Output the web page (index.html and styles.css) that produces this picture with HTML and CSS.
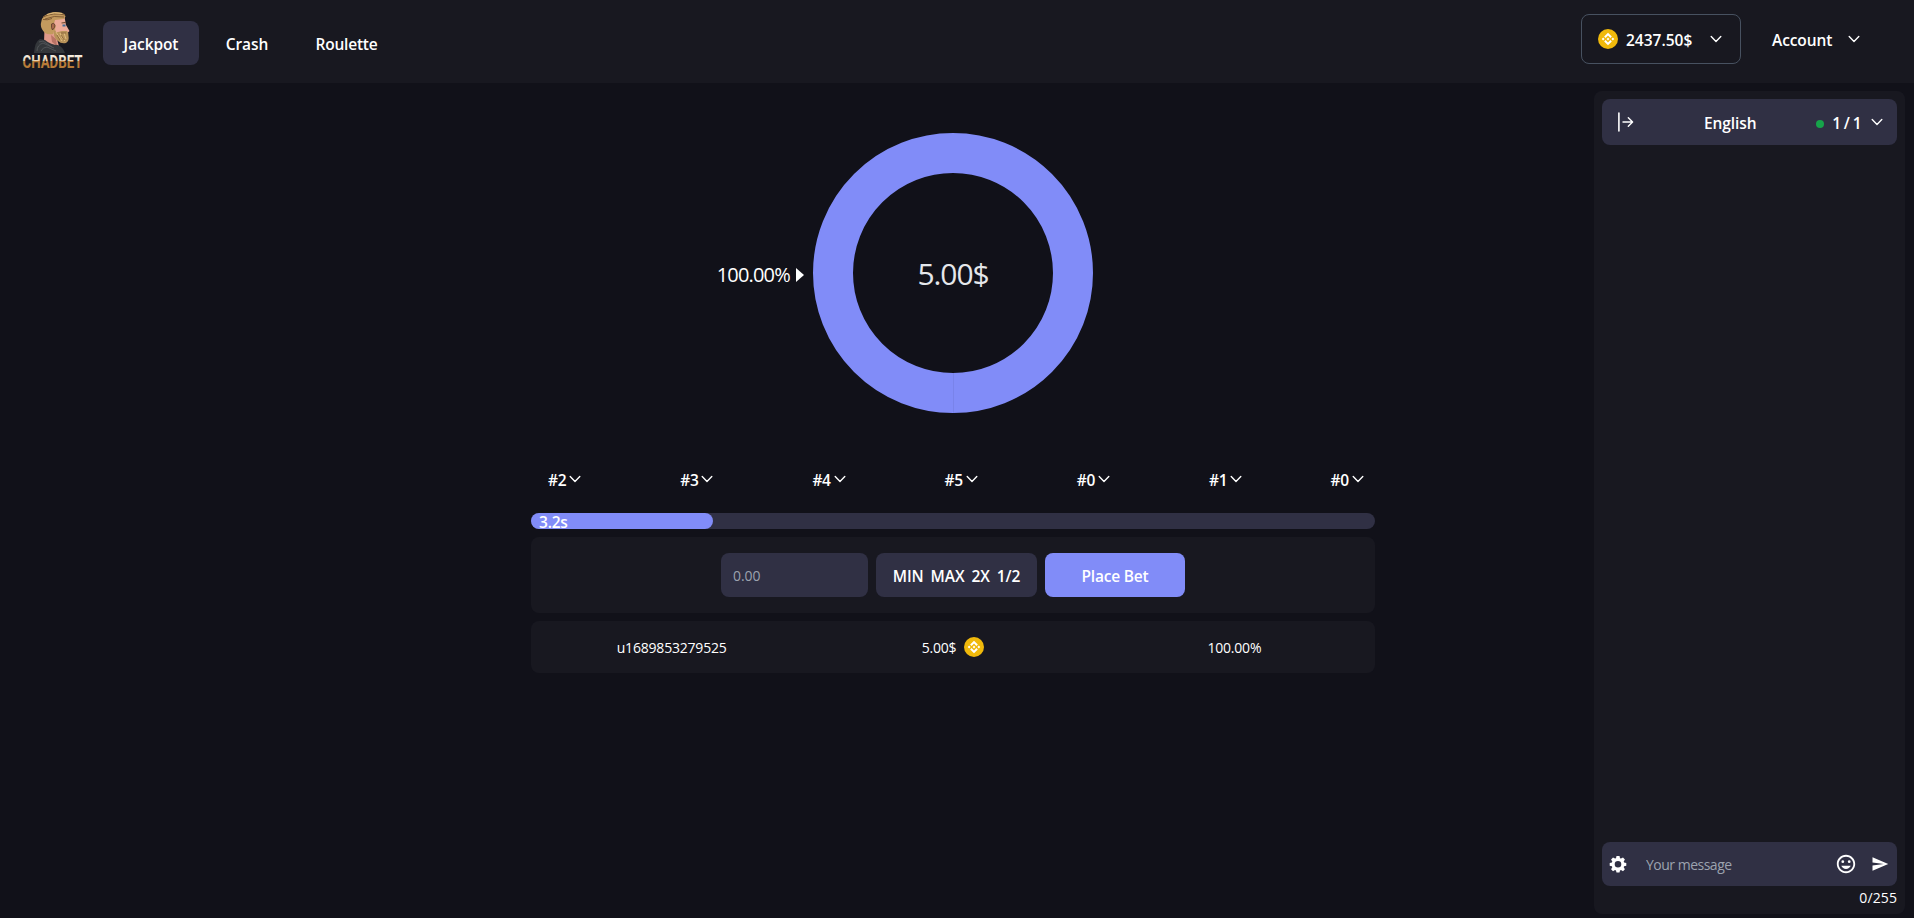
FILE: index.html
```html
<!DOCTYPE html>
<html lang="en">
<head>
<meta charset="utf-8">
<title>Chadbet</title>
<link rel="stylesheet" href="styles.css">
</head>
<body>
<svg width="0" height="0" class="defs">
  <symbol id="chev" viewBox="0 0 16 16"><path d="M3.2 5.600 8 10.400l4.800-4.800" fill="none" stroke="currentColor" stroke-width="1.400" stroke-linecap="round" stroke-linejoin="round"/></symbol>
  <symbol id="bnb" viewBox="0 0 32 32"><circle cx="16" cy="16" r="16" fill="#f0b90b"/><path fill="#fff" d="M12.116 14.404 16 10.52l3.886 3.886 2.26-2.26L16 6l-6.144 6.144 2.26 2.26zM6 16l2.26-2.26L10.52 16l-2.26 2.26L6 16zm6.116 1.596L16 21.48l3.886-3.886 2.26 2.259L16 26l-6.144-6.144-.003-.003 2.263-2.257zM21.48 16l2.26-2.26L26 16l-2.26 2.26L21.48 16zm-3.188-.002h.002V16L16 18.294l-2.291-2.29-.004-.004.004-.003.401-.402.195-.195L16 13.706l2.293 2.293z"/></symbol>
</svg>
<header class="topbar">
  <div class="logo">
    <svg class="head" width="40" height="42" viewBox="0 0 40 42">
      <path d="M10.500 18 24 22l-.5 8 2 7-8 1-7.500-7z" fill="#e0998a"/>
      <path d="m17 24 5 4 1 7-5-4z" fill="#b97365"/>
      <path d="M0 42q1-12 6-14l5 1q6 5 13 5 5 2 7 8z" fill="#33363a"/>
      <path d="M3 40q0-6 6-8 4 2 11 5M7 40q2-4 6-4l9 4M5 31l4-1 9 6" fill="none" stroke="#575a5e" stroke-width=".8"/>
      <path d="m17 6 13.500 0 1.500 8 3.500 6-2 2-14 2-5-7z" fill="#edaa98"/>
      <path d="M10 5Q17-.2 25 1.200q6 .8 6.500 4.300L30 8l-9 1-1 4 2 2-3 8q-5 1-8-1-5-5-4-10 0-4 3-7z" fill="#c39a5e"/>
      <path d="M9 6q10-5 22-2M11 8q9-4 19-2M9 8.500q4 1 9-1" fill="none" stroke="#805b34" stroke-width="1"/>
      <path d="M13 3.500Q20 .6 28 2.500" fill="none" stroke="#dfbd7d" stroke-width="1"/>
      <path d="M17.500 13q2.500-2 3.500 1 0 3-2.500 5-1.500-2-1-6z" fill="#a9694d" stroke="#5d3a2b" stroke-width=".8"/>
      <path d="M21 17q0 5 3 4l4-1 5 0q2 2 1.500 5 1 5-2.500 7-5 1-8-2-4-3-4.500-8z" fill="#b9935a"/>
      <path d="m22 21 3 5 3 4m-2-8 2 5 3 3m-1-8 2 6" fill="none" stroke="#e0bd80" stroke-width="1"/>
      <path d="m23 24 3 5m1-5 3 5m-3-7 5 0" fill="none" stroke="#7c5731" stroke-width=".7"/>
      <path d="m27.500 12 4.500-.6" stroke="#754d35" stroke-width="1.200"/>
      <path d="M28.500 14.500h3" stroke="#456c98" stroke-width="2"/>
    </svg>
    <svg class="brand" width="64" height="20" viewBox="0 0 64 20">
      <defs><linearGradient id="gold" gradientUnits="userSpaceOnUse" x1="0" y1="1" x2="0" y2="15"><stop offset=".1" stop-color="#f5eee3"/><stop offset=".48" stop-color="#e6cfae"/><stop offset=".52" stop-color="#b87b38"/><stop offset="1" stop-color="#b87b38"/></linearGradient></defs>
      <text x=".5" y="14.500" textLength="60" lengthAdjust="spacingAndGlyphs" fill="url(#gold)">CHADBET</text>
    </svg>
  </div>
  <nav class="nav">
    <a class="tab active"><span>Jackpot</span></a>
    <a class="tab crash"><span>Crash</span></a>
    <a class="tab roulette"><span>Roulette</span></a>
  </nav>
  <div class="right">
    <button class="balance"><svg class="coin"><use href="#bnb"/></svg><span>2437.50$</span><svg class="chev"><use href="#chev"/></svg></button>
    <button class="account"><span>Account</span><svg class="chev"><use href="#chev"/></svg></button>
  </div>
</header>
<div class="body">
  <main class="game">
    <div class="wheel">
      <div class="pointer"><span>100.00%</span><i></i></div>
      <svg width="280" height="280" viewBox="0 0 280 280"><circle cx="140" cy="140" r="120" fill="none" stroke="#818cf8" stroke-width="40"/><path d="M140.500 240v40" stroke="#7983ea" stroke-width="1"/></svg>
      <span class="pot">5.00$</span>
    </div>
    <div class="rounds">
      <span>#2<svg class="chev"><use href="#chev"/></svg></span>
      <span>#3<svg class="chev"><use href="#chev"/></svg></span>
      <span>#4<svg class="chev"><use href="#chev"/></svg></span>
      <span>#5<svg class="chev"><use href="#chev"/></svg></span>
      <span>#0<svg class="chev"><use href="#chev"/></svg></span>
      <span class="narrow">#1<svg class="chev"><use href="#chev"/></svg></span>
      <span class="last">#0<svg class="chev"><use href="#chev"/></svg></span>
    </div>
    <div class="track"><div class="fill"><span>3.2s</span></div></div>
    <div class="panel bet">
      <input class="amount" placeholder="0.00">
      <div class="quick"><span>MIN</span><span>MAX</span><span>2X</span><span>1/2</span></div>
      <button class="place"><span>Place Bet</span></button>
    </div>
    <div class="panel row">
      <div><span>u1689853279525</span></div>
      <div class="stake"><span>5.00$</span><svg class="coin"><use href="#bnb"/></svg></div>
      <div><span>100.00%</span></div>
    </div>
  </main>
  <aside class="chat">
    <div class="chathead">
      <svg width="20" height="20" viewBox="0 0 20 20" fill="none" stroke="#fff" stroke-linecap="round"><path d="M2.900 1v18" stroke-width="1.600"/><path d="M7 10h9.500M12.300 5.700 16.600 10l-4.300 4.300" stroke-width="1.400" stroke-linejoin="round"/></svg>
      <span class="lang">English</span>
      <span class="online"><i></i><span>1 / 1</span><svg class="chev"><use href="#chev"/></svg></span>
    </div>
    <div class="messages"></div>
    <div class="compose">
      <svg class="gear" width="20" height="20" viewBox="0 0 20 20"><path fill="#fff" fill-rule="evenodd" d="M8.500 2h3l.5 2.200 1 .4 2-1.100 1.900 1.900-1.200 2 .4 1 2.200.6v2.700l-2.200.6-.4 1 1.200 2-1.900 1.900-2-1.200-1 .4-.5 2.100h-3L8 16.400l-1-.4-2 1.200-1.900-1.900 1.200-2-.4-1-2.200-.6V9l2.200-.6.4-1-1.200-2L5 3.500l2 1.100 1-.4zM10 7a3.300 3.300 0 1 0 0 6.600A3.300 3.300 0 0 0 10 7z"/></svg>
      <input placeholder="Your message">
      <svg class="smile" width="24" height="24" viewBox="0 0 24 24" fill="#fff"><path d="M11.990 2C6.470 2 2 6.480 2 12s4.470 10 9.990 10C17.520 22 22 17.520 22 12S17.520 2 11.990 2zM12 20c-4.420 0-8-3.580-8-8s3.580-8 8-8 8 3.580 8 8-3.580 8-8 8z"/><circle cx="8.500" cy="9.500" r="1.500"/><circle cx="15.500" cy="9.500" r="1.500"/><path d="M12 17.500c2.330 0 4.310-1.460 5.110-3.500H6.890c.8 2.040 2.780 3.500 5.110 3.500z"/></svg>
      <svg class="send" width="18" height="18" viewBox="0 0 24 24"><path fill="#fff" d="M2.010 21 23 12 2.010 3 2 10l15 2-15 2z"/></svg>
    </div>
    <div class="count"><span>0/255</span></div>
  </aside>
</div>
</body>
</html>
```
FILE: styles.css
```css
* { box-sizing: border-box; }
body { margin: 0; height: 918px; overflow: hidden; background: #111119; color: #fff; font: 600 16px/24px "Open Sans", "Noto Sans", sans-serif; display: flex; flex-direction: column; }
.defs { position: absolute; }
button, input { font: inherit; color: inherit; border: 0; background: none; padding: 0; margin: 0; outline: 0; min-width: 0; }
svg { flex: none; display: block; }
.chev { width: 16px; height: 16px; }
.coin { width: 20px; height: 20px; }
.topbar { height: 83px; background: #181820; display: flex; flex: none; }
.logo { width: 103px; padding: 11px 0 0 22px; display: flex; flex-direction: column; }
.head { margin-left: 12px; }
.brand { font: 700 18px "Roboto", sans-serif; overflow: visible; }
.nav { display: flex; padding-top: 21px; }
.tab { height: 44px; width: 96px; border-radius: 8px; display: flex; align-items: center; justify-content: center; font-size: 15.500px; letter-spacing: -.1px; padding-top: 2px; }
.active { background: #303044; }
.roulette { width: 103px; letter-spacing: -.2px; }
.right { margin-left: auto; display: flex; }
.balance { margin-top: 14px; width: 160px; height: 50px; border: 1px solid #475160; border-radius: 8px; display: flex; align-items: center; padding: 0 16px; font-size: 15.500px; letter-spacing: 0; }
.balance span { padding: 2px 0 0 8px; width: 83px; text-align: left; }
.balance .coin { margin-top: -1px; }
.balance .chev { margin-left: 7px; }
.account { height: 50px; margin: 14px 0 0 31px; width: 142px; display: flex; align-items: center; font-size: 15.500px; letter-spacing: -.1px; }
.account span { width: 74px; text-align: left; padding-top: 2px; }
.body { flex: 1; display: flex; min-height: 0; }
.game { flex: 1; min-width: 0; margin-left: 312px; padding: 50px 219px 0; display: flex; flex-direction: column; }
.wheel { height: 280px; display: grid; grid-template-columns: 1fr 280px 1fr; align-items: center; margin-bottom: 53px; }
.pointer { display: flex; justify-content: flex-end; align-items: center; font: 400 20px/28px "Open Sans", sans-serif; letter-spacing: -.8px; gap: 6px; padding: 4px 9px 0 0; }
.pointer i { border-left: 8px solid #fff; border-top: 7.500px solid transparent; border-bottom: 7.500px solid transparent; }
.wheel svg { grid-area: 1 / 2; }
.pot { grid-area: 1 / 2; text-align: center; font: 400 30px/36px "Open Sans", sans-serif; letter-spacing: -1.100px; color: #e5e7eb; padding-top: 2px; }
.rounds { display: flex; height: 28px; padding: 2px 0 0 17px; font-size: 15.500px; letter-spacing: -.3px; }
.rounds span { display: flex; flex: none; width: 132.200px; }
.rounds .narrow { width: 121.500px; }
.rounds .last { width: auto; }
.rounds .chev { margin: 3px 0 0 1px; }
.track { margin-top: 19px; height: 16px; border-radius: 8px; background: #303044; flex: none; }
.fill { height: 16px; width: 182px; background: #818cf8; border-radius: 8px; padding-left: 8px; line-height: 18px; font-size: 15.500px; letter-spacing: -.2px; }
.panel { background: #181820; border-radius: 8px; margin-top: 8px; flex: none; display: flex; }
.bet { height: 76px; padding-top: 16px; gap: 8px; justify-content: center; }
.amount { width: 147px; height: 44px; background: #303044; border-radius: 8px; padding: 1px 12px 0; font-weight: 400; font-size: 14px; letter-spacing: -.1px; }
::placeholder { color: #9ca3af; opacity: 1; }
.quick { width: 161px; height: 44px; background: #303044; border-radius: 8px; display: flex; align-items: center; justify-content: center; gap: 7px; padding-top: 2px; font-size: 15.500px; letter-spacing: -.1px; }
.place { width: 140px; height: 44px; background: #818cf8; border-radius: 8px; padding-top: 2px; font-size: 15.500px; letter-spacing: -.2px; }
.row { height: 52px; font-weight: 500; font-size: 14px; letter-spacing: -.2px; display: grid; grid-template-columns: repeat(3, 1fr); align-items: center; text-align: center; padding-top: 2px; }
.stake { display: flex; justify-content: center; gap: 8px; align-items: center; }
.stake .coin { margin-top: -3px; }
.chat { flex: none; width: 311px; margin: 8px 9px 4px 0; background: #181820; border-radius: 8px; padding: 8px 8px 0; display: flex; flex-direction: column; }
.chathead { height: 46px; background: #303044; border-radius: 8px; display: flex; align-items: center; padding: 0 12px 0 14px; }
.lang { margin-left: 68px; padding-top: 2px; font-size: 15.500px; letter-spacing: -.1px; }
.online { margin-left: auto; display: flex; align-items: center; font-size: 15.500px; letter-spacing: -.6px; }
.online i { width: 8px; height: 8px; border-radius: 50%; background: #16a34a; margin: 4px 8px 0 0; }
.online > span { padding-top: 2px; margin-right: 8px; }
.messages { flex: 1; }
.compose { height: 44px; background: #303044; border-radius: 8px; display: flex; align-items: center; padding: 0 8px 0 6px; }
.compose input { flex: 1; padding: 2px 0 0 18px; font-weight: 400; font-size: 14px; letter-spacing: -.5px; }
.smile { width: 22px; height: 22px; }
.send { margin-left: 14px; }
.count { text-align: right; height: 28px; line-height: 23px; font-weight: 500; font-size: 14px; letter-spacing: .1px; }
```
